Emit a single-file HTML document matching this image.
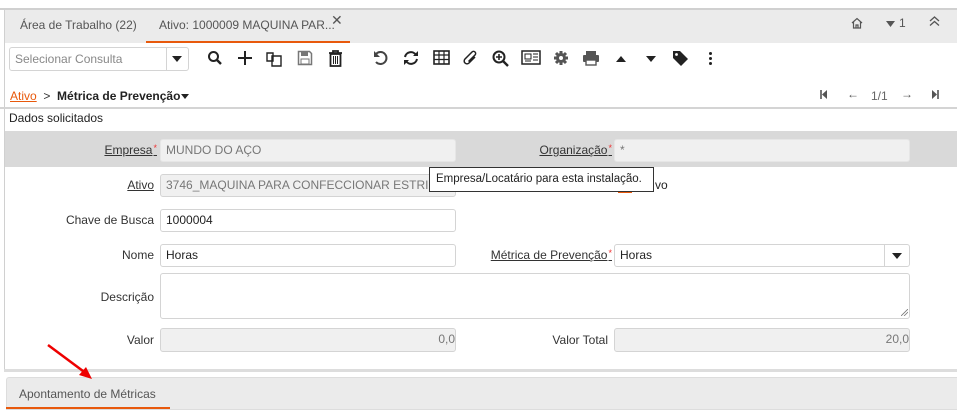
<!DOCTYPE html>
<html><head><meta charset="utf-8">
<style>
*{box-sizing:border-box;margin:0;padding:0}
body{width:957px;height:418px;overflow:hidden;background:#fff;font-family:"Liberation Sans",sans-serif;font-size:12px;color:#333;position:relative}
.a{position:absolute}
.lbl{position:absolute;text-align:right;font-size:12px;color:#333;white-space:nowrap}
.u{text-decoration:underline}
.req{color:#e33;font-size:9px;vertical-align:top;margin-left:1px}
.in{position:absolute;border:1px solid #d4d4d4;border-radius:3px;background:#fff;font-size:12px;padding:0 5px;line-height:21px;color:#222;white-space:nowrap;overflow:hidden}
.ro{background:#f0f0f0;color:#777}
.ic{position:absolute;top:50px}
</style></head><body>
<div class="a" style="left:0;top:8px;width:957px;height:2px;background:#d0d0d0"></div>
<div class="a" style="left:4px;top:10px;width:953px;height:33px;background:#ebebeb;border-left:1px solid #d0d0d0"></div>
<div class="a" style="left:20px;top:18px;font-size:12px;color:#555">Área de Trabalho (22)</div>
<div class="a" style="left:159px;top:18px;font-size:12px;color:#555">Ativo: 1000009 MAQUINA PAR...</div>
<div class="a" style="left:331px;top:12px;font-size:14px;color:#555">✕</div>
<div class="a" style="left:146px;top:41px;width:204px;height:2px;background:#e8590c"></div>
<svg class="a" style="left:851px;top:17px" width="12" height="12" viewBox="0 0 12 12"><path d="M1 6L6 1.5L11 6M2.5 5v6h7V5M5 11V8h2v3" fill="none" stroke="#555" stroke-width="1.2"/></svg>
<svg class="a" style="left:886px;top:21px" width="9" height="6" viewBox="0 0 9 6"><path d="M0 0h9L4.5 6z" fill="#555"/></svg>
<div class="a" style="left:899px;top:16px;font-size:12px;color:#555">1</div>
<svg class="a" style="left:929px;top:16px" width="11" height="10" viewBox="0 0 11 10"><path d="M1 5l4.5-4 4.5 4M1 9.5l4.5-4 4.5 4" fill="none" stroke="#555" stroke-width="1.3"/></svg>
<div class="a" style="left:4px;top:43px;width:1px;height:327px;background:#d0d0d0"></div>
<!-- toolbar -->
<div class="in" style="left:9px;top:47px;width:180px;height:24px;color:#888;line-height:22px">Selecionar Consulta</div>
<div class="a" style="left:166px;top:48px;width:1px;height:22px;background:#d4d4d4"></div>
<svg class="a" style="left:172px;top:56px" width="10" height="6" viewBox="0 0 10 6"><path d="M0 0h10L5 6z" fill="#222"/></svg>
<svg class="ic" style="left:207px" width="16" height="16" viewBox="0 0 16 16"><circle cx="6.5" cy="6.5" r="4.5" fill="none" stroke="#222" stroke-width="2"/><path d="M10 10l4 4" stroke="#222" stroke-width="2.4"/></svg>
<svg class="ic" style="left:237px" width="16" height="16" viewBox="0 0 16 16"><path d="M8 1v14M1 8h14" stroke="#222" stroke-width="2"/></svg>
<svg class="ic" style="left:266px" width="17" height="17" viewBox="0 0 17 17"><path d="M1 3h6v8H1zM6 6h9v10H6z" fill="#fff" stroke="#222" stroke-width="1.4"/></svg>
<svg class="ic" style="left:297px" width="16" height="16" viewBox="0 0 16 16"><path d="M1.5 1.5h11l2 2v11h-13z" fill="none" stroke="#777" stroke-width="1.5"/><rect x="4" y="2" width="7" height="4" fill="#777"/><rect x="4" y="9" width="8" height="5" fill="none" stroke="#777"/></svg>
<svg class="ic" style="left:328px" width="15" height="17" viewBox="0 0 15 17"><path d="M1 3h13M5 3V1h5v2M2.5 4h10v12h-10z" fill="none" stroke="#222" stroke-width="1.8"/><path d="M5.5 6v8M7.5 6v8M9.5 6v8" stroke="#222"/></svg>
<svg class="ic" style="left:373px" width="16" height="16" viewBox="0 0 16 16"><path d="M3 4A6 6 0 1 1 3 12" fill="none" stroke="#444" stroke-width="2"/><path d="M1 1v6h6z" fill="#444"/></svg>
<svg class="ic" style="left:403px" width="16" height="16" viewBox="0 0 16 16"><path d="M13 5A6 6 0 0 0 2 7M3 11a6 6 0 0 0 11-2" fill="none" stroke="#222" stroke-width="2"/><path d="M15 1v5h-5zM1 15v-5h5z" fill="#222"/></svg>
<svg class="ic" style="left:433px" width="17" height="15" viewBox="0 0 17 15"><rect x="1" y="1" width="15" height="13" fill="none" stroke="#222" stroke-width="1.6"/><path d="M1 5h15M1 9.5h15M6 1v13M11 1v13" stroke="#222" stroke-width="1.2"/></svg>
<svg class="ic" style="left:463px" width="16" height="17" viewBox="0 0 16 17"><path d="M12 7L6 13a2.5 2.5 0 0 1-4-4l7-7a1.8 1.8 0 0 1 3 3L5.5 11.5" fill="none" stroke="#222" stroke-width="1.5"/></svg>
<svg class="ic" style="left:492px" width="18" height="18" viewBox="0 0 18 18"><circle cx="7" cy="7" r="5.5" fill="none" stroke="#222" stroke-width="2"/><path d="M11 11l5 5" stroke="#222" stroke-width="2.4"/><path d="M7 4v6M4 7h6" stroke="#222" stroke-width="1.6"/></svg>
<svg class="ic" style="left:521px" width="20" height="16" viewBox="0 0 20 16"><rect x="1" y="1" width="18" height="13" fill="none" stroke="#222" stroke-width="1.5"/><rect x="4" y="4" width="6" height="5" fill="none" stroke="#222"/><path d="M12 4h5M12 7h5M12 10h5M4 11h6" stroke="#222"/></svg>
<svg class="ic" style="left:553px" width="16" height="16" viewBox="0 0 16 16"><circle cx="8" cy="8" r="5" fill="#555"/><path d="M8 1v14M1 8h14M3 3l10 10M13 3L3 13" stroke="#555" stroke-width="3"/><circle cx="8" cy="8" r="2" fill="#fff"/></svg>
<svg class="ic" style="left:582px" width="18" height="16" viewBox="0 0 18 16"><rect x="4" y="1" width="10" height="4" fill="#555"/><rect x="1" y="5" width="16" height="7" rx="1" fill="#555"/><rect x="4" y="10" width="10" height="5" fill="#fff" stroke="#555" stroke-width="1.4"/></svg>
<svg class="a" style="left:616px;top:56px" width="10" height="6" viewBox="0 0 10 6"><path d="M0 6h10L5 0z" fill="#222"/></svg>
<svg class="a" style="left:646px;top:56px" width="10" height="6" viewBox="0 0 10 6"><path d="M0 0h10L5 6z" fill="#222"/></svg>
<svg class="ic" style="left:672px" width="17" height="17" viewBox="0 0 17 17"><path d="M1 1h7l8 8-7 7-8-8z" fill="#222"/><circle cx="4.5" cy="4.5" r="1.4" fill="#fff"/></svg>
<div class="a" style="left:709px;top:52px;width:3px;height:3px;border-radius:50%;background:#222;box-shadow:0 5px #222,0 10px #222"></div>
<!-- breadcrumb -->
<div class="a" style="left:10px;top:89px;font-size:12px"><span class="u" style="color:#e8590c">Ativo</span> &nbsp;&gt;&nbsp; <b style="color:#222">Métrica de Prevenção</b></div>
<svg class="a" style="left:181px;top:94px" width="8" height="5" viewBox="0 0 8 5"><path d="M0 0h8L4 5z" fill="#222"/></svg>
<svg class="a" style="left:820px;top:90px" width="8" height="9" viewBox="0 0 8 9"><path d="M1 0v9" stroke="#555" stroke-width="1.6"/><path d="M7 0v9L2 4.5z" fill="#555"/></svg>
<div class="a" style="left:847px;top:87px;font-size:12px;color:#555">←</div>
<div class="a" style="left:871px;top:89px;font-size:12px;color:#666">1/1</div>
<div class="a" style="left:901px;top:87px;font-size:12px;color:#555">→</div>
<svg class="a" style="left:931px;top:90px" width="8" height="9" viewBox="0 0 8 9"><path d="M7 0v9" stroke="#555" stroke-width="1.6"/><path d="M1 0v9L6 4.5z" fill="#555"/></svg>
<div class="a" style="left:0;top:107px;width:957px;height:2px;background:#d4d4d4"></div>
<div class="a" style="left:9px;top:111px;font-size:12px;color:#222">Dados solicitados</div>
<!-- gray band -->
<div class="a" style="left:5px;top:131px;width:952px;height:36px;background:#d9d9d9"></div>
<div class="lbl u" style="right:800px;top:143px">Empresa<span class="req">*</span></div>
<div class="in ro" style="left:160px;top:139px;width:296px;height:23px;border-color:#e6e6e6">MUNDO DO AÇO</div>
<div class="lbl u" style="right:345px;top:143px">Organização<span class="req">*</span></div>
<div class="in ro" style="left:614px;top:139px;width:296px;height:23px;border-color:#e6e6e6">*</div>
<div class="lbl u" style="right:803px;top:178px">Ativo</div>
<div class="in ro" style="left:160px;top:174px;width:296px;height:23px">3746_MAQUINA PARA CONFECCIONAR ESTRIBOS</div>
<div class="a" style="left:618px;top:190px;width:14px;height:3px;background:#e8590c"></div>
<div class="a" style="left:655px;top:178px;font-size:12px;color:#222">vo</div>
<div class="a" style="left:429px;top:167px;width:225px;height:25px;background:#fff;border:1px solid #333;font-size:11.5px;color:#222;padding:5px 0 0 6px;white-space:nowrap;overflow:hidden">Empresa/Locatário para esta instalação.</div>
<div class="lbl" style="right:803px;top:213px">Chave de Busca</div>
<div class="in" style="left:160px;top:209px;width:296px;height:23px">1000004</div>
<div class="lbl" style="right:803px;top:248px">Nome</div>
<div class="in" style="left:160px;top:244px;width:296px;height:23px">Horas</div>
<div class="lbl u" style="right:345px;top:248px">Métrica de Prevenção<span class="req">*</span></div>
<div class="in" style="left:614px;top:244px;width:296px;height:23px">Horas</div>
<div class="a" style="left:884px;top:245px;width:1px;height:21px;background:#d4d4d4"></div>
<svg class="a" style="left:892px;top:253px" width="10" height="6" viewBox="0 0 10 6"><path d="M0 0h10L5 6z" fill="#222"/></svg>
<div class="lbl" style="right:803px;top:290px">Descrição</div>
<div class="in" style="left:160px;top:273px;width:750px;height:46px"></div>
<svg class="a" style="left:901px;top:309px" width="7" height="7" viewBox="0 0 7 7"><path d="M0 7L7 0M3 7L7 3" stroke="#777" stroke-width="0.8"/></svg>
<div class="lbl" style="right:803px;top:333px">Valor</div>
<div class="in ro" style="left:160px;top:328px;width:296px;height:24px;text-align:right;padding-right:0">0,0</div>
<div class="lbl" style="right:349px;top:333px">Valor Total</div>
<div class="in ro" style="left:614px;top:328px;width:296px;height:24px;text-align:right;padding-right:0">20,0</div>
<div class="a" style="left:4px;top:369px;width:953px;height:3px;background:#ddd"></div>
<div class="a" style="left:6px;top:377px;width:951px;height:33px;background:#ebebeb;border:1px solid #ddd;border-right:0;border-radius:3px 0 0 0"></div>
<div class="a" style="left:19px;top:387px;font-size:12px;color:#555">Apontamento de Métricas</div>
<div class="a" style="left:6px;top:407px;width:164px;height:2px;background:#e8590c"></div>
<svg class="a" style="left:40px;top:340px" width="60" height="45" viewBox="0 0 60 45"><path d="M8 5L47 34" stroke="#e00" stroke-width="2.5"/><path d="M52 39L39 35L46 27z" fill="#e00"/></svg>
</body></html>
